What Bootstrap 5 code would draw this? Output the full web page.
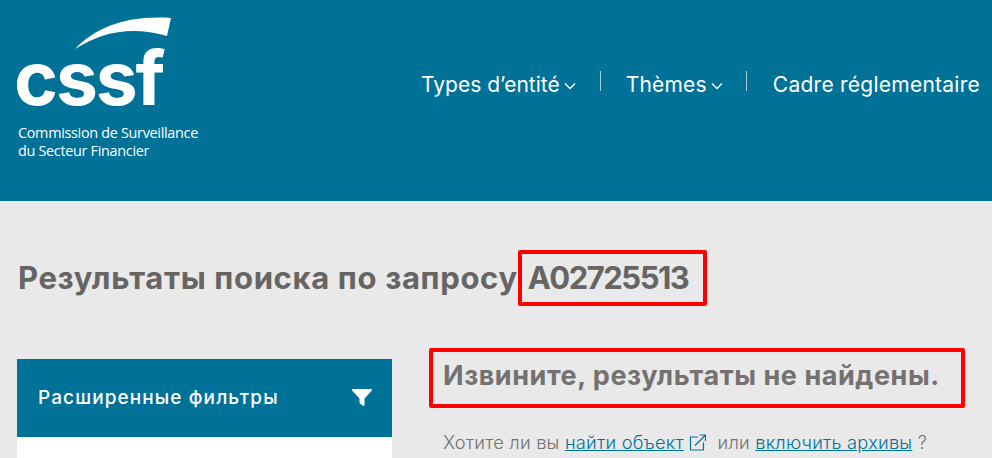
<!DOCTYPE html>
<html lang="ru">
<head>
<meta charset="utf-8">
<title>CSSF</title>
<link href="https://cdn.jsdelivr.net/npm/bootstrap@5.3.0/dist/css/bootstrap.min.css" rel="stylesheet">
<style>
html,body{height:458px;overflow:hidden}
body{background:#e9e9e9;font-family:Inter,"Noto Sans",sans-serif;color:#6b6866}
.site-head{height:201px;background:#007197;padding:15px 12px 0 17px}
.brand-box{width:190px;position:relative;color:#fff}
.brand-swoosh{display:block;margin-left:50px;height:36px;width:125px}
.brand-word{font-family:Inter,sans-serif;font-weight:700;font-size:75px;line-height:56px;letter-spacing:-2.2px;margin-top:-1px;height:56px;margin-left:-3px}
.brand-sub{font-family:"Open Sans",sans-serif;font-size:14.4px;line-height:18px;letter-spacing:-.3px;margin-top:18px;white-space:nowrap;padding-left:1px}
.top-links{margin-top:56px;font-size:21px;color:#fff}
.top-item{height:20px;display:flex;align-items:center;white-space:nowrap;padding:0 0 0 26px}
.top-item+.top-item{border-left:1px solid #a8cbd8}
.top-item:first-child{padding-right:24px}
.top-item:nth-child(2){padding:0 23px 0 25px;letter-spacing:.2px}
.top-item:nth-child(3){letter-spacing:.25px}
.top-item span{margin-top:7px}
.top-item svg{margin:9px 0 0 4px}
.page-title{font-size:31px;font-weight:700;line-height:36px;margin:0;padding:59px 0 0 18px;color:#676563;letter-spacing:.65px;height:158px;white-space:nowrap}
.mark-box{position:relative;display:inline-block;letter-spacing:-1.5px;margin-left:2px}
.mark-box::after{content:"";position:absolute;left:-10px;width:189px;top:-10px;bottom:-10px;border:4px solid #f00;border-radius:2px}
.page-cols{display:flex;padding-left:17px}
.filter-col{width:375px;flex:none}
.filter-head{height:78px;background:#007197;color:#fff;display:flex;align-items:center;justify-content:space-between;padding:0 20px 0 21px;font-size:19px;font-weight:500;letter-spacing:1.1px}
.filter-body{height:21px;background:#fff}
.result-col{margin-left:51px;flex:1;position:relative}
.none-title{font-size:27px;font-weight:700;line-height:32px;color:#747170;margin:0;height:70px;margin-top:1px;letter-spacing:.55px;white-space:nowrap}
.mark-wide{position:absolute;left:-14px;top:-11px;width:536px;height:60px;border:4px solid #f00;border-radius:2px}
.hint{font-size:18.3px;line-height:24px;color:#747170;white-space:nowrap;margin:0;font-weight:300;letter-spacing:.2px}
.hint a{color:#00739c}
.hint svg{vertical-align:-2px;margin:0 6px 0 0}
</style>
</head>
<body>
<header class="site-head d-flex justify-content-between align-items-start">
  <a class="brand-box d-block text-decoration-none" href="#">
    <svg class="brand-swoosh" viewBox="0 0 125 36" aria-hidden="true"><path d="M8 34C30 11 62 0 104 3L100 21C66 11 36 16 8 34Z" fill="#fff"/></svg>
    <div class="brand-word">cssf</div>
    <div class="brand-sub">Commission de Surveillance<br>du Secteur Financier</div>
  </a>
  <nav class="top-links d-flex">
    <div class="top-item"><span>Types d’entité</span><svg width="12" height="8" viewBox="0 0 12 8"><path d="M1 1.5l5 5 5-5" fill="none" stroke="#fff" stroke-width="1.3"/></svg></div>
    <div class="top-item"><span>Thèmes</span><svg width="12" height="8" viewBox="0 0 12 8"><path d="M1 1.5l5 5 5-5" fill="none" stroke="#fff" stroke-width="1.3"/></svg></div>
    <div class="top-item"><span>Cadre réglementaire</span></div>
  </nav>
</header>
<main>
  <h1 class="page-title">Результаты поиска по запросу <span class="mark-box">A02725513</span></h1>
  <div class="page-cols">
    <aside class="filter-col">
      <div class="filter-head"><span>Расширенные фильтры</span>
        <svg width="20" height="18" viewBox="0 0 20 18" aria-hidden="true"><path d="M1 0h18c.9 0 1.3 1 .7 1.7L12.5 9.5V16c0 .8-.9 1.2-1.6.8l-2.5-2c-.6-.4-.9-.9-.9-1.5V9.5L.3 1.7C-.3 1 .1 0 1 0Z" fill="#fff"/></svg>
      </div>
      <div class="filter-body"></div>
    </aside>
    <section class="result-col">
      <div class="mark-wide"></div>
      <h2 class="none-title">Извините, результаты не найдены.</h2>
      <p class="hint">Хотите ли вы <a href="#">найти объект</a> <svg width="17" height="17" viewBox="0 0 17 17" aria-hidden="true"><g fill="none" stroke="#00739c" stroke-width="1.2"><path d="M9 3H1.5v13h13V8.5"/><path d="M6 11.5 16 1.5M10.5 1h6v6"/></g></svg> или <a href="#">включить архивы</a> ?</p>
    </section>
  </div>
</main>
</body>
</html>
